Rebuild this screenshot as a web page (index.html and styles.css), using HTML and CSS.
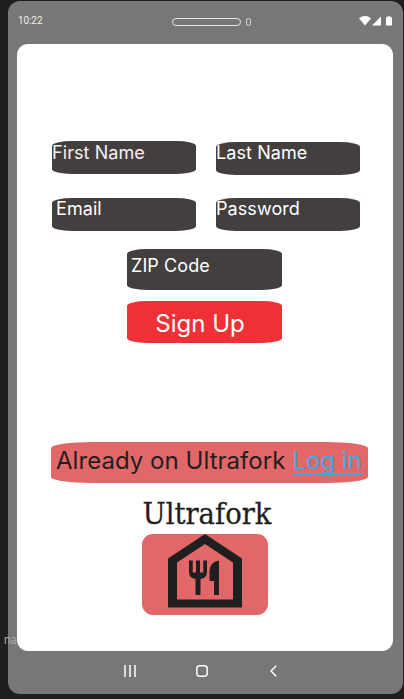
FILE: index.html
```html
<!DOCTYPE html>
<html lang="en">
<head>
<meta charset="utf-8">
<title>Ultrafork – Sign Up</title>
<link rel="stylesheet" href="styles.css">
</head>
<body>
<div class="phone">
  <header class="status">
    <span class="time">10:22</span>
    <span class="speaker"></span>
    <span class="camera"></span>
    <svg class="signals" width="34" height="10" viewBox="0 0 34 10" fill="#fff">
      <path d="M0 2.2Q6 -2 12 2.2L6 9.4Z"/>
      <path d="M13 9.5L22 .5V9.5Z"/>
      <path d="M27 1.2H28.6V.2H31.4V1.2H33V9.5H27Z"/>
    </svg>
  </header>
  <main class="screen">
    <form class="form">
      <div class="fields">
        <div class="field blush">First Name</div>
        <div class="field lower">Last Name</div>
        <div class="field indent">Email</div>
        <div class="field">Password</div>
      </div>
      <div class="field zip">ZIP Code</div>
      <div class="submit">Sign Up</div>
    </form>
    <p class="banner"><span class="question">Already on Ultrafork</span><a class="login">Log in</a></p>
    <div class="brand">
      <svg class="name" width="140" height="37" viewBox="0 0 140 37"><text x="0.5" y="27" textLength="129" lengthAdjust="spacingAndGlyphs">Ultrafork</text></svg>
      <div class="logo">
        <svg width="74" height="74" viewBox="0 0 74 74" fill="#1f1f1f">
          <path fill-rule="evenodd" d="M0 24.5L37 0L74 24.5V73.5H0ZM9 28.5V65.5H65V28.5L37 10Z"/>
          <path d="M21 26.5H24.7V38.5H28V26.5H32V38.5H35.3V26.5H39V38Q39 44 32.5 45V61H27.5V45Q21 44 21 38Z"/>
          <path d="M51 26.5V61H46V47H41.5V37Q42 28 51 26.5Z"/>
        </svg>
      </div>
    </div>
  </main>
  <nav class="keys">
    <svg width="12" height="12" viewBox="0 0 12 12"><path d="M1 0V12M6 0V12M11 0V12"/></svg>
    <svg width="12" height="12" viewBox="0 0 12 12"><rect x=".8" y=".8" width="10.4" height="10.4" rx="3"/></svg>
    <svg width="7" height="12" viewBox="0 0 7 12"><path d="M6.2 .8L1 6L6.2 11.2"/></svg>
  </nav>
  <span class="tag">na</span>
</div>
</body>
</html>
```
FILE: styles.css
```css
* { box-sizing: border-box; }
body {
  margin: 0;
  height: 699px;
  padding: 1px 1px 0 8px;
  overflow: hidden;
  background: #1f1f1f;
  font-family: Inter, "Liberation Sans", sans-serif;
}
.phone {
  position: relative;
  height: 693px;
  padding: 0 10px 0 9px;
  border-radius: 12px;
  background: #777;
}
.status {
  display: flex;
  align-items: center;
  height: 43px;
  padding-bottom: 3px;
}
.time {
  width: 156px;
  padding-left: 1px;
  font: 10px/12px Roboto, sans-serif;
  letter-spacing: -0.1px;
  color: #eee;
}
.speaker {
  width: 70px;
  height: 8px;
  margin: 2px 0 0 1px;
  border: 1px solid #e4e4e4;
  border-radius: 4px;
}
.camera {
  width: 5px;
  height: 8px;
  margin: 2px 0 0 5px;
  border: 1px solid #ddd;
  border-radius: 3px;
}
.signals { margin: 0 0 0 108px; flex: none; }
.screen {
  height: 607px;
  padding-top: 97px;
  border-radius: 11px;
  background: #fff;
}
.form { padding-left: 35px; }
.fields {
  display: grid;
  grid-template-columns: 144px 144px;
  grid-auto-rows: 33px;
  gap: 24px 20px;
}
.field {
  border-radius: 20px / 5px;
  background: #433f3e;
  color: #fff;
  font-size: 18px;
  line-height: 22px;
  letter-spacing: 0.08px;
  white-space: nowrap;
}
.blush {
  color: #fdeeee;
  line-height: 24px;
}
.lower { margin: 1px 0 -1px; }
.indent { padding-left: 4px; }
.zip {
  width: 155px;
  height: 41px;
  margin: 18px 0 0 75px;
  padding: 6px 0 0 4px;
}
.submit {
  width: 155px;
  height: 42px;
  margin: 11px 0 0 75px;
  padding-right: 9px;
  border-radius: 20px / 5px;
  background: #f03037;
  color: #fff;
  font-size: 24px;
  line-height: 45px;
  text-align: center;
}
.banner {
  display: flex;
  justify-content: space-between;
  width: 317px;
  height: 41px;
  margin: 99px 0 0 34px;
  padding: 0 6px 0 5px;
  border-radius: 42px / 6px;
  background: #e26768;
  color: #1f1f1f;
  font-size: 24px;
  line-height: 37px;
  letter-spacing: 0.04px;
  white-space: nowrap;
}
.login {
  color: #3cabe5;
  text-decoration: underline 2px;
  text-underline-offset: 4px;
  text-decoration-skip-ink: none;
}
.brand { padding: 14px 0 0 125px; }
.name {
  display: block;
  fill: #1f1f1f;
  stroke: #1f1f1f;
  stroke-width: 0.3;
  font: 29px "Roboto Slab", "DejaVu Serif", serif;
}
.logo {
  display: flex;
  justify-content: center;
  width: 126px;
  height: 81px;
  border-radius: 11px;
  background: #e26768;
}
.keys {
  display: flex;
  align-items: center;
  height: 40px;
  padding-left: 107px;
  gap: 60px;
}
.keys svg {
  fill: none;
  stroke: #fff;
  stroke-width: 1.5;
}
.keys svg:last-child { margin-left: 2px; }
.tag {
  position: absolute;
  left: -4px;
  top: 633px;
  font-size: 11px;
  line-height: 13px;
  color: #aaa;
}
```
